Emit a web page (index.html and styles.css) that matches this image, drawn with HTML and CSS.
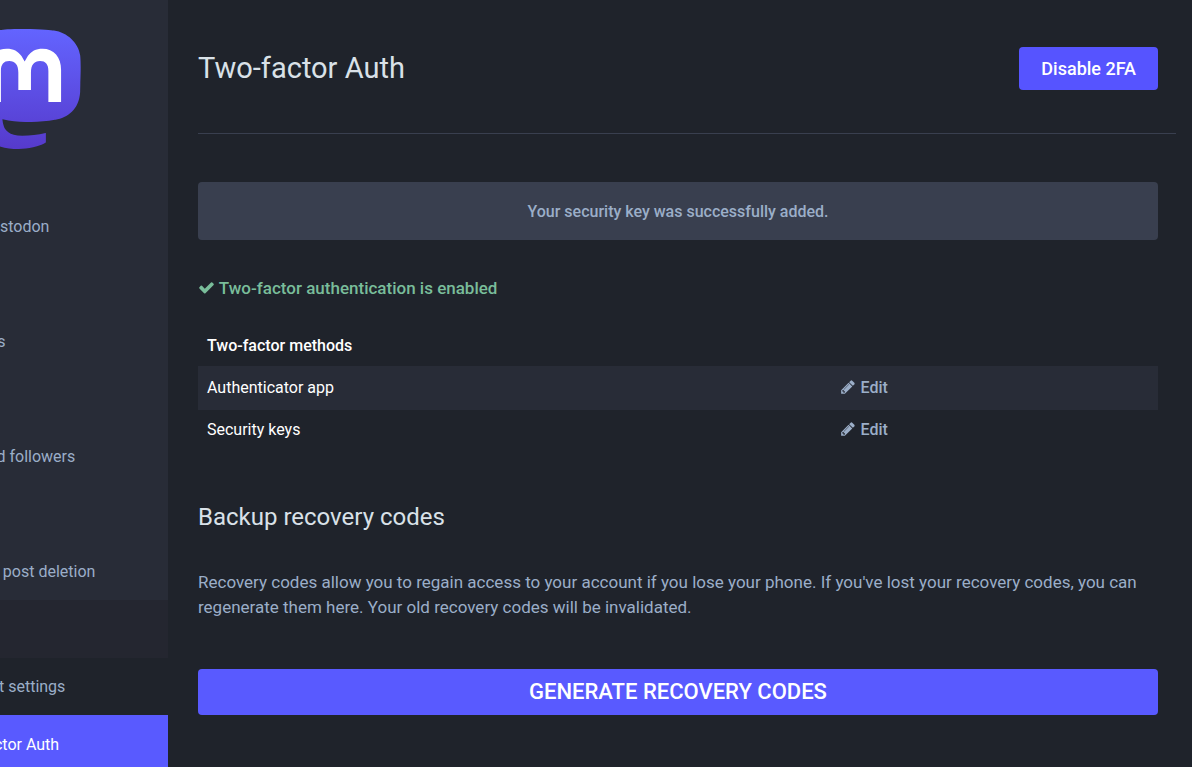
FILE: index.html
```html
<!DOCTYPE html>
<html lang="en">
<head>
<meta charset="utf-8">
<meta name="viewport" content="width=device-width, initial-scale=1">
<title>Two-factor Auth</title>
<link rel="stylesheet" href="styles.css">
</head>
<body>
<svg class="defs" width="0" height="0" aria-hidden="true">
  <symbol id="pencil" viewBox="0 0 1536 1792"><path d="M363 1536l91-91-235-235-91 91v107h128v128h107zm523-928q0-22-22-22-10 0-17 7l-542 542q-7 7-7 17 0 22 22 22 10 0 17-7l542-542q7-7 7-17zm-54-192l416 416-832 832h-416v-416zm683 96q0 53-37 90l-166 166-416-416 166-165q36-38 90-38 53 0 91 38l235 234q37 39 37 91z"/></symbol>
  <symbol id="check" viewBox="0 0 1792 1792"><path d="M1671 566q0 40-28 68l-724 724-136 136q-28 28-68 28t-68-28l-136-136-362-362q-28-28-28-68t28-68l136-136q28-28 68-28t68 28l294 295 656-657q28-28 68-28t68 28l136 136q28 28 28 68z"/></symbol>
</svg>
<div class="layout">
  <aside class="sidebar">
    <a class="logo" href="#" aria-label="Home">
      <svg viewBox="0 0 75 79" width="114" height="120" aria-hidden="true">
        <defs><linearGradient id="brand" x1="0" y1="0" x2="0" y2="1"><stop stop-color="#6364ff"/><stop offset="1" stop-color="#563acc"/></linearGradient></defs>
        <path fill="url(#brand)" d="M73.8393 17.4898C72.6973 9.00165 65.2994 2.31235 56.5296 1.01614C55.05 0.797115 49.4441 0 36.4582 0H36.3612C23.3717 0 20.585 0.797115 19.1054 1.01614C10.5798 2.27644 2.79399 8.28712 0.904997 16.8758C-0.00358524 21.1056 -0.100549 25.7949 0.0682394 30.0965C0.308852 36.2651 0.355538 42.423 0.91577 48.566C1.30307 52.6464 1.97872 56.6957 2.93763 60.6812C4.73325 68.042 12.0019 74.1676 19.1233 76.6666C26.7478 79.2728 34.9474 79.7055 42.8039 77.9162C43.6682 77.7151 44.5217 77.4817 45.3645 77.216C47.275 76.6092 49.5123 75.9305 51.1571 74.7385C51.21 74.69 51.2325 74.65 51.2325 74.5948V68.6416C51.2325 68.53 51.13 68.45 51.0171 68.4729C45.9835 69.675 40.8254 70.2777 35.6502 70.2682C26.7439 70.2682 24.3486 66.042 23.6626 64.2826C23.1113 62.762 22.7612 61.1759 22.6212 59.5646C22.62 59.44 22.72 59.36 22.8367 59.3886C27.7864 60.5826 32.8604 61.1853 37.9522 61.1839C39.1768 61.1839 40.3978 61.1839 41.6224 61.1516C46.7435 61.008 52.1411 60.7459 57.1796 59.7621C57.3053 59.7369 57.431 59.7154 57.5387 59.6831C65.4861 58.157 73.0493 53.3672 73.8178 41.2381C73.8465 40.7606 73.9184 36.2364 73.9184 35.7409C73.9219 34.0569 74.4606 23.7949 73.8393 17.4898Z"/>
        <path fill="#fff" d="M61.2484 27.0263V48.114H52.8916V27.6475C52.8916 23.3388 51.096 21.1413 47.4437 21.1413C43.4287 21.1413 41.4177 23.7409 41.4177 28.8755V40.0782H33.1111V28.8755C33.1111 23.7409 31.0965 21.1413 27.0815 21.1413C23.4507 21.1413 21.6371 23.3388 21.6371 27.6475V48.114H13.284V27.0263C13.284 22.7176 14.384 19.2946 16.5843 16.7572C18.8539 14.2258 21.8311 12.926 25.5264 12.926C29.8036 12.926 33.0357 14.5705 35.1905 17.8559L37.2698 21.346L39.3527 17.8559C41.5074 14.5705 44.7395 12.926 49.0095 12.926C52.7013 12.926 55.6784 14.2258 57.9553 16.7572C60.1531 19.2922 61.2508 22.7152 61.2484 27.0263Z"/>
      </svg>
    </a>
    <nav class="menu">
      <a href="#">Back to Mastodon</a>
      <a class="spaced" href="#">Preferences</a>
      <a class="spaced" href="#">Follows and followers</a>
      <a class="spaced" href="#">Automated post deletion</a>
      <div class="section"></div>
      <div class="submenu">
        <a href="#">Account settings</a>
        <a class="selected" href="#" aria-current="page">Two-factor Auth</a>
      </div>
    </nav>
  </aside>
  <main class="content">
    <header class="heading">
      <h1>Two-factor Auth</h1>
      <button class="button" type="button">Disable 2FA</button>
    </header>
    <div class="body">
      <div class="flash">Your security key was successfully added.</div>
      <p class="enabled"><svg class="check" aria-hidden="true"><use href="#check"/></svg> Two-factor authentication is enabled</p>
      <table class="methods">
        <thead><tr><th>Two-factor methods</th><th></th></tr></thead>
        <tbody>
          <tr><td>Authenticator app</td><td><a href="#"><svg class="pencil" aria-hidden="true"><use href="#pencil"/></svg>Edit</a></td></tr>
          <tr><td>Security keys</td><td><a href="#"><svg class="pencil" aria-hidden="true"><use href="#pencil"/></svg>Edit</a></td></tr>
        </tbody>
      </table>
      <h2>Backup recovery codes</h2>
      <p class="lead">Recovery codes allow you to regain access to your account if you lose your phone. If you've lost your recovery codes, you can regenerate them here. Your old recovery codes will be invalidated.</p>
      <button class="button block" type="button">Generate recovery codes</button>
    </div>
  </main>
</div>
</body>
</html>
```
FILE: styles.css
```css
* { box-sizing: border-box; }
body {
  margin: 0;
  background: #1f232b;
  color: #fff;
  font: 16px/20px Roboto, sans-serif;
}
a { color: #9baec8; text-decoration: none; }
.defs { display: none; }
.layout { display: flex; min-height: 100vh; }

.sidebar {
  flex: 0 0 168px;
  overflow: hidden;
  background: #282c37;
}
.logo { display: block; margin: 29px 0 48px -32px; }
.logo svg { display: block; }
.menu { display: flex; flex-direction: column; }
.menu a {
  padding: 20px 0 18px 18px;
  margin-left: -98px;
  white-space: nowrap;
}
.menu .spaced { margin-top: 57px; }
.section { height: 58px; background: #242630; }
.submenu { display: flex; flex-direction: column; background: #1f232b; }
.submenu a { padding: 19px 0 18px 43px; }
.submenu .selected { padding-top: 20px; background: #595aff; color: #fff; }

.content { flex: 1; min-width: 0; padding: 47px 16px 48px 30px; }
.heading {
  display: flex;
  align-items: center;
  justify-content: space-between;
  padding: 0 18px 43px 0;
  border-bottom: 1px solid #393f4f;
}
h1, h2 { margin: 0; font-weight: 400; color: #d9e1e8; }
h1 { font-size: 29px; line-height: 43px; }
.button {
  padding: 0 22px;
  border: 0;
  border-radius: 4px;
  background: #5654ff;
  color: #fff;
  font: 500 18px/43px Roboto, sans-serif;
}
.body { padding: 48px 18px 0 0; }
.flash {
  padding: 20px 20px 18px;
  border-radius: 4px;
  background: #393f4f;
  color: #9baec8;
  font-weight: 500;
  text-align: center;
}
.enabled {
  margin: 36px 0 35px;
  color: #79bd9a;
  font-size: 17px;
  line-height: 25px;
  font-weight: 500;
}
.check { width: 17px; height: 17px; fill: currentColor; vertical-align: -2px; }
.methods { width: 100%; border-collapse: collapse; table-layout: fixed; }
.methods th, .methods td { padding: 10px 9px; text-align: left; }
.methods th { font-weight: 500; padding-top: 0; }
.methods th:first-child { width: 66%; }
.methods tbody tr:first-child { background: #282c37; }
.methods tbody tr:first-child td { padding: 12px 9px; }
.methods a { font-weight: 500; }
.pencil { width: 14px; height: 16px; margin-right: 6px; fill: currentColor; vertical-align: -2px; }
h2 { margin: 52px 0 38px; font-size: 24px; line-height: 30px; }
.lead { margin: 0 0 49px; color: #9baec8; font-size: 17px; line-height: 25px; }
.block {
  width: 100%;
  background: #595aff;
  font-size: 22px;
  line-height: 46px;
  text-transform: uppercase;
}
```
